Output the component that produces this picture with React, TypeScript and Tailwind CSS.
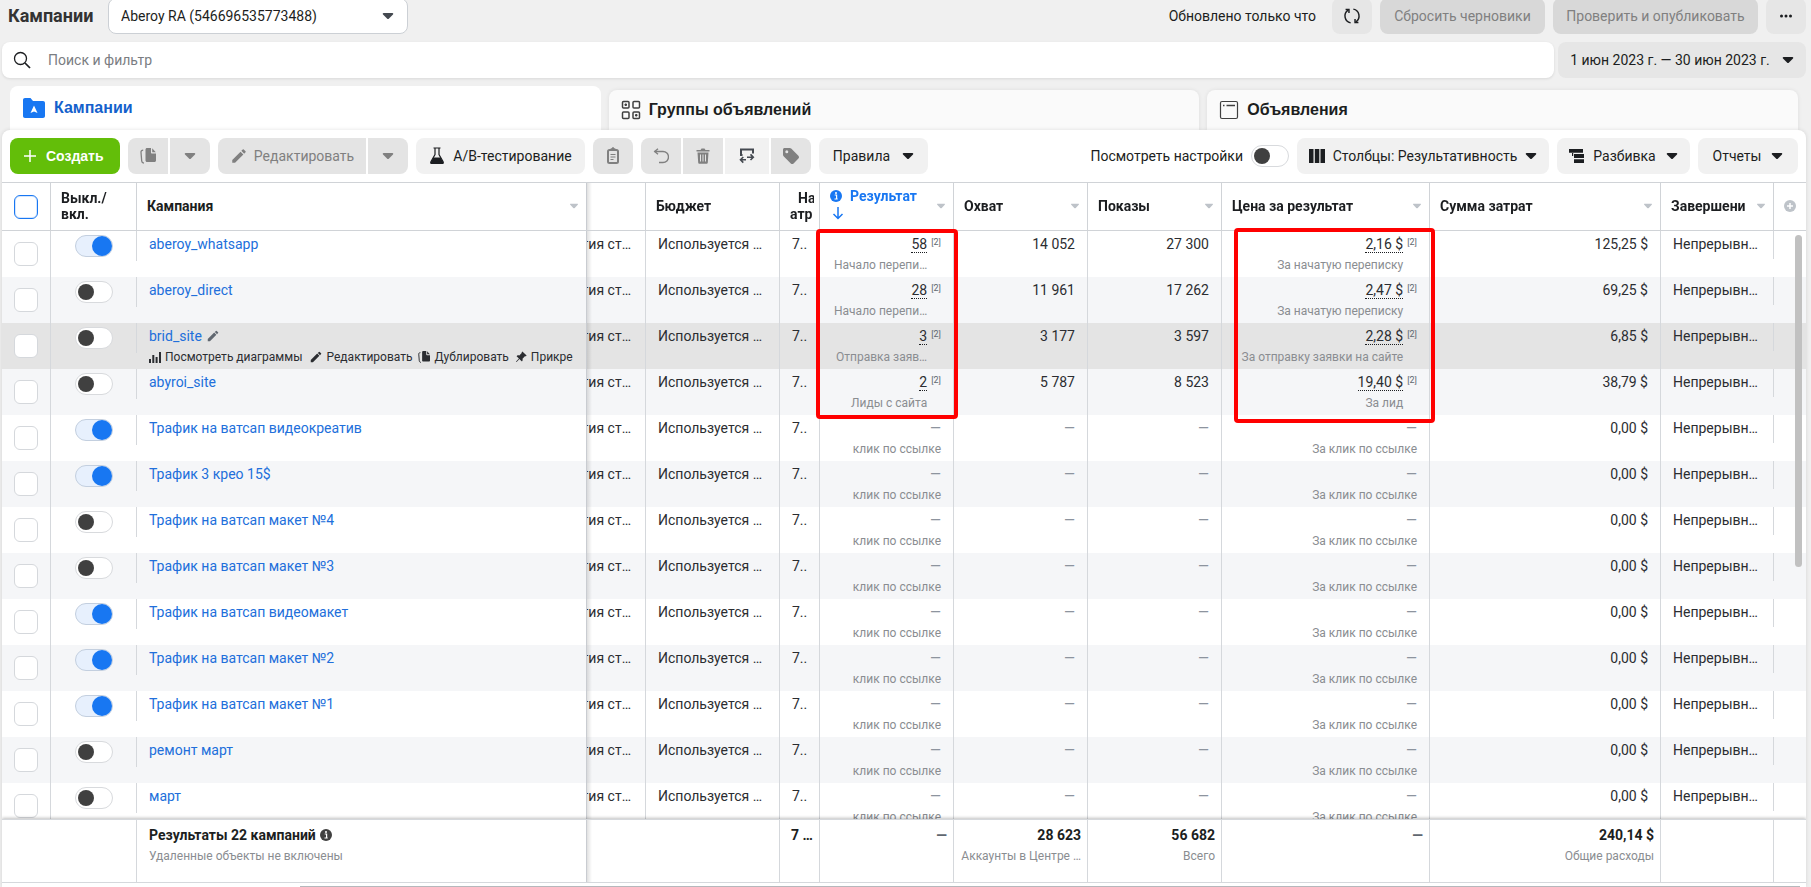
import type { ReactNode } from "react";
import clsx from "clsx";
import { MdEdit } from "react-icons/md";
import { BsPinAngleFill } from "react-icons/bs";

interface Campaign {
  name: string;
  on: boolean;
  result?: string;
  resultLabel: string;
  reach?: string;
  views?: string;
  price?: string;
  priceLabel: string;
  spent: string;
  hovered?: boolean;
}

const noResult = {
  resultLabel: "клик по ссылке",
  priceLabel: "За клик по ссылке",
  spent: "0,00 $",
};

const campaigns: Campaign[] = [
  {
    name: "aberoy_whatsapp",
    on: true,
    result: "58",
    resultLabel: "Начало перепи…",
    reach: "14 052",
    views: "27 300",
    price: "2,16 $",
    priceLabel: "За начатую переписку",
    spent: "125,25 $",
  },
  {
    name: "aberoy_direct",
    on: false,
    result: "28",
    resultLabel: "Начало перепи…",
    reach: "11 961",
    views: "17 262",
    price: "2,47 $",
    priceLabel: "За начатую переписку",
    spent: "69,25 $",
  },
  {
    name: "brid_site",
    on: false,
    result: "3",
    resultLabel: "Отправка заяв…",
    reach: "3 177",
    views: "3 597",
    price: "2,28 $",
    priceLabel: "За отправку заявки на сайте",
    spent: "6,85 $",
    hovered: true,
  },
  {
    name: "abyroi_site",
    on: false,
    result: "2",
    resultLabel: "Лиды с сайта",
    reach: "5 787",
    views: "8 523",
    price: "19,40 $",
    priceLabel: "За лид",
    spent: "38,79 $",
  },
  { name: "Трафик на ватсап видеокреатив", on: true, ...noResult },
  { name: "Трафик 3 крео 15$", on: true, ...noResult },
  { name: "Трафик на ватсап макет №4", on: false, ...noResult },
  { name: "Трафик на ватсап макет №3", on: false, ...noResult },
  { name: "Трафик на ватсап видеомакет", on: true, ...noResult },
  { name: "Трафик на ватсап макет №2", on: true, ...noResult },
  { name: "Трафик на ватсап макет №1", on: true, ...noResult },
  { name: "ремонт март", on: false, ...noResult },
  { name: "март", on: false, ...noResult },
];

function Caret({ className = "text-[#1c1e21]" }: { className?: string }) {
  return (
    <svg viewBox="0 0 12 8" className={clsx("h-2 w-3 shrink-0", className)} fill="currentColor">
      <path d="M1.6 1h8.8c.8 0 1.2.8.6 1.4L7 6.6a1.4 1.4 0 0 1-2 0L1 2.400C.4 1.800.8 1 1.600 1Z" />
    </svg>
  );
}

function HeadCaret() {
  return <Caret className="ml-auto scale-75 text-[#bec3c9]" />;
}

function DuplicateIcon({ className }: { className: string }) {
  return (
    <svg viewBox="0 0 16 16" className={className} fill="currentColor">
      <path d="M7 0h4v4.500c0 .6.400 1 1 1h4V12.500c0 .8-.7 1.500-1.500 1.500H7c-.8 0-1.500-.7-1.500-1.500v-11C5.500.7 6.200 0 7 0Z" />
      <path d="M12.200.2 15.800 4.300h-3.200c-.2 0-.4-.2-.4-.4Z" />
      <path d="M3.200 2.200c-1.500 0-2.300.7-2.200 2l.7 8.800c.1 1.300.8 2 2.300 2.200" fill="none" stroke="currentColor" strokeWidth="1.300" />
    </svg>
  );
}

function InfoIcon({ className }: { className: string }) {
  return (
    <svg viewBox="0 0 12 12" className={clsx("h-3 w-3 shrink-0", className)}>
      <circle cx="6" cy="6" r="6" fill="currentColor" />
      <circle cx="6" cy="3.100" r="1" fill="#fff" />
      <path d="M4.700 5h1.900v3.700M4.500 9h3.200" stroke="#fff" strokeWidth="1.200" fill="none" />
    </svg>
  );
}

function Switch({ on, label }: { on: boolean; label: string }) {
  return (
    <input
      type="checkbox"
      role="switch"
      aria-label={label}
      defaultChecked={on}
      className="relative block h-[22px] w-[38px] shrink-0 appearance-none rounded-full border border-[#d8dadd] bg-white before:absolute before:top-0.5 before:left-0.5 before:h-4 before:w-4 before:rounded-full before:bg-[#404040] checked:border-[#c3cfdf] checked:bg-[#e7f0fd] checked:before:top-0 checked:before:left-4 checked:before:h-5 checked:before:w-5 checked:before:bg-[#1877f2]"
    />
  );
}

function ToolButton({
  children,
  label,
  className,
  disabled,
}: {
  children: ReactNode;
  label?: string;
  className?: string;
  disabled?: boolean;
}) {
  return (
    <button
      type="button"
      aria-label={label}
      disabled={disabled}
      className={clsx(
        "flex h-9 shrink-0 items-center justify-center whitespace-nowrap",
        disabled ? "bg-[#e4e4e4] text-[#808080]" : "bg-[#f1f1f1] text-[#1c1e21]",
        className,
      )}
    >
      {children}
    </button>
  );
}

function TopBar() {
  return (
    <header className="flex h-[34px] items-end gap-2 overflow-hidden pl-1.5">
      <h1 className="flex h-9 w-[92px] items-center text-lg font-bold text-[#333]">Кампании</h1>
      <div className="grid w-[300px] items-center">
        <select
          aria-label="Рекламный аккаунт"
          className="col-start-1 row-start-1 h-9 w-full appearance-none rounded-lg border border-[#ccd0d5] bg-white pr-8 pl-3 text-sm"
        >
          <option>Aberoy RA (546696535773488)</option>
        </select>
        <Caret className="pointer-events-none col-start-1 row-start-1 mr-3.5 justify-self-end text-[#444950]" />
      </div>
      <span className="ml-auto flex h-9 items-center pr-2">Обновлено только что</span>
      <ToolButton label="Обновить" className="w-10 rounded-lg bg-[#e6e6e6]!">
        <svg viewBox="0 0 16 16" className="h-[18px] w-[18px]" fill="none" stroke="currentColor" strokeWidth="1.300">
          <path d="M6.800 14.100A6.200 6.200 0 0 1 4.600 2.800M9.200 1.900A6.200 6.200 0 0 1 11.400 13.200" />
          <path d="M2.300 2.300h3v3M13.700 13.700h-3v-3" />
        </svg>
      </ToolButton>
      <ToolButton disabled className="w-[165px] rounded-lg bg-[#d8d8d8]!">
        Сбросить черновики
      </ToolButton>
      <ToolButton disabled className="w-[205px] rounded-lg bg-[#d8d8d8]!">
        Проверить и опубликовать
      </ToolButton>
      <ToolButton label="Ещё" className="w-10 rounded-lg bg-[#e6e6e6]!">
        <svg viewBox="0 0 14 4" className="h-1 w-3.5" fill="currentColor">
          <circle cx="2.500" cy="2" r="1.500" />
          <circle cx="7" cy="2" r="1.500" />
          <circle cx="11.500" cy="2" r="1.500" />
        </svg>
      </ToolButton>
    </header>
  );
}

function SearchBar() {
  return (
    <div className="mt-2 flex gap-1">
      <label className="flex h-9 grow items-center rounded-lg bg-white pl-[11px] shadow-[0_1px_3px_rgba(0,0,0,0.1)]">
        <svg viewBox="0 0 18 18" className="h-[18px] w-[18px]" fill="none" stroke="#1c1e21" strokeWidth="1.300">
          <circle cx="7.500" cy="7.500" r="6" />
          <path d="m12 12 5 5" strokeWidth="1.700" />
        </svg>
        <input
          type="text"
          placeholder="Поиск и фильтр"
          aria-label="Поиск и фильтр"
          className="ml-[17px] grow bg-transparent outline-none placeholder:text-[#7a7d82]"
        />
      </label>
      <ToolButton className="w-[248px] gap-3 rounded-lg bg-[#e6e6e6]!">
        1 июн 2023 г. — 30 июн 2023 г.
        <Caret />
      </ToolButton>
    </div>
  );
}

function Tabs() {
  const title = "font-['Liberation_Sans','Arial',sans-serif] text-base font-bold";
  const idle =
    "flex h-10 items-center gap-2 rounded-t-lg bg-[#fafafa] px-3 shadow-[0_0_4px_rgba(0,0,0,0.08)]";
  return (
    <nav role="tablist" className="mt-2 grid grid-cols-3 items-end gap-2 px-2">
      <button
        type="button"
        role="tab"
        aria-selected="true"
        className="flex h-11 items-center gap-2 rounded-t-lg bg-white px-3 text-[#1461cc]"
      >
        <svg viewBox="0 0 24 22" className="h-[22px] w-6">
          <path d="M1 3c0-1.200.8-2 2-2h5.500l2.500 3h10c1.200 0 2 .8 2 2v13c0 1.200-.8 2-2 2H3c-1.200 0-2-.8-2-2Z" fill="#1877f2" />
          <path d="M12 8.500 15.500 16 12 14.500 8.500 16Z" fill="#fff" />
        </svg>
        <span className={title}>Кампании</span>
      </button>
      <button type="button" role="tab" aria-selected="false" className={idle}>
        <svg viewBox="0 0 20 20" className="h-5 w-5" fill="none" stroke="#404040" strokeWidth="1.500">
          <rect x="1.500" y="1.500" width="6.500" height="6.500" rx="1" />
          <rect x="12" y="1.500" width="6.500" height="6.500" rx="1" />
          <rect x="1.500" y="12" width="6.500" height="6.500" rx="1" />
          <rect x="12" y="12" width="6.500" height="6.500" rx="1" />
          <path d="M4.750 3.500v2.500M3.500 4.750h2.500M15.250 14v2.500M14 15.250h2.500" />
        </svg>
        <span className={title}>Группы объявлений</span>
      </button>
      <button type="button" role="tab" aria-selected="false" className={idle}>
        <svg viewBox="0 0 20 20" className="h-5 w-5" fill="none" stroke="#404040">
          <rect x="1.500" y="1.500" width="17" height="17" rx="1.500" strokeWidth="1.200" />
          <path d="M4 5.500h1.500M7.500 5.500H16" strokeWidth="1.500" />
        </svg>
        <span className={title}>Объявления</span>
      </button>
    </nav>
  );
}

function Toolbar() {
  return (
    <div className="flex items-center gap-2 px-2 py-2">
      <button
        type="button"
        className="flex h-9 w-[110px] shrink-0 items-center gap-2.5 rounded-lg bg-[#63be09] pl-3.5 font-['Liberation_Sans','Arial',sans-serif] font-bold text-white"
      >
        <svg viewBox="0 0 12 12" className="h-3 w-3" stroke="#fff" strokeWidth="1.500">
          <path d="M6 0v12M0 6h12" />
        </svg>
        Создать
      </button>
      <div className="flex gap-0.5">
        <ToolButton disabled label="Дублировать" className="w-10 rounded-l-lg">
          <DuplicateIcon className="h-4 w-4" />
        </ToolButton>
        <ToolButton disabled label="Варианты дублирования" className="w-10 rounded-r-lg">
          <Caret className="text-[#808080]" />
        </ToolButton>
      </div>
      <div className="flex gap-0.5">
        <ToolButton disabled className="w-[148px] gap-1.5 rounded-l-lg">
          <MdEdit className="h-[18px] w-[18px]" />
          Редактировать
        </ToolButton>
        <ToolButton disabled label="Варианты редактирования" className="w-10 rounded-r-lg">
          <Caret className="text-[#808080]" />
        </ToolButton>
      </div>
      <ToolButton className="w-[169px] gap-2 rounded-lg">
        <svg viewBox="0 0 16 18" className="h-[18px] w-4" fill="currentColor">
          <path d="M4.500 1h7M6 1v6.500L2 14.500c-.6 1.100 0 2 1.200 2h9.600c1.200 0 1.800-.9 1.200-2L10 7.500V1" fill="none" stroke="currentColor" strokeWidth="1.200" />
          <path d="M4.500 10.500h7l3 5c.3.700 0 1.500-1 1.500h-11c-1 0-1.300-.8-1-1.500Z" />
        </svg>
        А/В-тестирование
      </ToolButton>
      <ToolButton disabled label="Вставить" className="w-10 rounded-lg">
        <svg viewBox="0 0 14 18" className="h-[18px] w-3.5" fill="none" stroke="currentColor">
          <rect x="2" y="3" width="10" height="13" rx="1.500" strokeWidth="2" />
          <path d="M4.500 3.500V2h1.200a1.300 1.300 0 0 1 2.600 0h1.200v1.500Z" fill="currentColor" strokeWidth="1" />
          <path d="M4.500 7.500h5M4.500 10h5M4.500 12.500h3" strokeWidth="1.200" />
        </svg>
      </ToolButton>
      <div className="flex gap-0.5">
        <ToolButton disabled label="Отменить" className="w-10 rounded-l-lg">
          <svg viewBox="0 0 16 16" className="h-4 w-4" fill="none" stroke="currentColor" strokeWidth="1.400">
            <path d="M1.500 3.500H10a5 5 0 0 1 0 11H6" />
            <path d="M5 .7 1.700 3.500 5 6.300" />
          </svg>
        </ToolButton>
        <ToolButton disabled label="Удалить" className="w-10">
          <svg viewBox="0 0 14 16" className="h-4 w-3.5" fill="currentColor">
            <path d="M.5 2h4L5.500.5h3L9.500 2h4v1.500H.5Z" />
            <path d="M1.500 4.500h11l-.7 10c0 .8-.6 1.300-1.300 1.300h-7c-.7 0-1.300-.5-1.300-1.300Z" />
            <path d="M4.500 6.500v7M7 6.500v7M9.500 6.500v7" stroke="#e4e4e4" strokeWidth="1" />
          </svg>
        </ToolButton>
        <ToolButton label="Импорт и экспорт" className="w-11 text-[#444950]!">
          <svg viewBox="0 0 16 16" className="h-4 w-4" fill="none" stroke="currentColor" strokeWidth="2">
            <path d="M3.500 7H2V1.500H14V5.500" />
            <path d="M7 11.800H1.500M4.300 9 1.500 11.800 4.300 14.600M8 9.200h6M11.500 6.400l2.800 2.800-2.800 2.800" strokeWidth="1.600" />
          </svg>
        </ToolButton>
        <ToolButton disabled label="Метки" className="w-10 rounded-r-lg">
          <svg viewBox="0 0 16 16" className="h-4 w-4" fill="currentColor" fillRule="evenodd">
            <path d="M0 1.500C0 .7.700 0 1.500 0h5.300c.5 0 1 .2 1.400.6l7.200 7.200c.8.800.8 2 0 2.800l-4.800 4.800c-.8.800-2 .8-2.800 0L.6 8.200C.2 7.800 0 7.300 0 6.800ZM3.800 5.200a1.500 1.500 0 1 0 0-3 1.500 1.500 0 0 0 0 3Z" />
          </svg>
        </ToolButton>
      </div>
      <ToolButton className="w-[109px] gap-3 rounded-lg">
        Правила
        <Caret />
      </ToolButton>

      <label className="ml-auto flex items-center gap-2">
        Посмотреть настройки
        <Switch on={false} label="Посмотреть настройки" />
      </label>
      <ToolButton className="w-[252px] gap-2 rounded-lg">
        <span className="flex items-center gap-2">
          <svg viewBox="0 0 16 14" className="h-3.5 w-4" fill="currentColor">
            <path d="M0 0h4.500v14H0zM5.800 0h4.500v14H5.800zM11.500 0H16v14h-4.500z" />
          </svg>
          Столбцы: Результативность
        </span>
        <Caret />
      </ToolButton>
      <ToolButton className="w-[133px] gap-2.5 rounded-lg">
        <span className="flex items-center gap-2">
          <svg viewBox="0 0 16 14" className="h-3.5 w-4" fill="currentColor">
            <path d="M0 0h14v3.800H0zM5 5.100h10v3.800H5zM5 10.200h10V14H5zM3 4h1.200v3H3z" />
          </svg>
          Разбивка
        </span>
        <Caret />
      </ToolButton>
      <ToolButton className="w-[100px] gap-2.5 rounded-lg">
        Отчеты
        <Caret />
      </ToolButton>
    </div>
  );
}

function HeadCell({ children, className }: { children?: ReactNode; className?: string }) {
  return (
    <th
      scope="col"
      className={clsx(
        "h-12 border-b border-l border-[#d0d3d7] bg-white p-0 pb-0.5 text-left leading-4 font-bold",
        className,
      )}
    >
      <div className="flex items-center pr-1.5 pl-2.5">{children}</div>
    </th>
  );
}

const cell = "border-l border-[#d5d8dc] p-0 align-top";

// fading edge that the pinned name column throws on the scrolled ones
const pinned =
  "relative z-10 after:absolute after:inset-y-0 after:left-full after:w-1.5 after:border-l after:border-[#c9ccd1] after:bg-linear-to-r after:from-black/12 after:to-transparent";

function Metric({ value, label }: { value?: string; label?: string }) {
  return (
    <div className="flex justify-end gap-1 pt-[3px] pr-3 text-right">
      <div className="min-w-0">
        {value && label ? (
          <span className="block leading-5">
            <span className="border-b border-dotted border-[#1c1e21]">{value}</span>
          </span>
        ) : (
          <span className={clsx("block leading-5", !value && "text-[#8d949e]")}>{value ?? "—"}</span>
        )}
        {label && (
          <span className="mt-[3px] block text-xs leading-4 whitespace-nowrap text-[#8a8d91]">{label}</span>
        )}
      </div>
      {value && label && <sup className="top-0 text-[9px] leading-4 text-[#606770]">[2]</sup>}
    </div>
  );
}

function RowActions() {
  const action = "flex shrink-0 items-center gap-1";
  return (
    <div className="mr-2.5 flex gap-1.5 pt-[3px] text-xs leading-4">
      <button type="button" className={action}>
        <svg viewBox="0 0 12 12" className="h-3 w-3" fill="currentColor">
          <path d="M0 8h2v4H0zM3.300 4h2v8h-2zM6.600 6h2v6h-2zM10 1h2v11h-2z" />
        </svg>
        Посмотреть диаграммы
      </button>
      <button type="button" className={action}>
        <MdEdit className="h-3.5 w-3.5" />
        Редактировать
      </button>
      <button type="button" className={action}>
        <DuplicateIcon className="h-3 w-3" />
        Дублировать
      </button>
      <button type="button" className={action}>
        <BsPinAngleFill className="h-3 w-3" />
        Прикре
      </button>
    </div>
  );
}

function CampaignRow({ item, striped }: { item: Campaign; striped: boolean }) {
  return (
    <tr className={item.hovered ? "bg-[#e4e4e4]" : striped ? "bg-[#f5f6f8]" : "bg-white"}>
      <td className="h-[46px] p-0 align-top">
        <input
          type="checkbox"
          aria-label={`Выбрать ${item.name}`}
          className="mx-auto mt-[11px] block h-6 w-6 appearance-none rounded-md border border-[#d5d8dc] bg-white"
        />
      </td>
      <td className={cell}>
        <div className="flex justify-center pt-1">
          <Switch on={item.on} label={`Статус ${item.name}`} />
        </div>
      </td>
      <td className={clsx("bg-inherit p-0 align-top", pinned)}>
        <div className="h-[30px] border-l border-[#d5d8dc] pt-[3px] pl-3">
          <div className="flex h-5 items-center gap-1 leading-5 whitespace-nowrap">
            <a href="#" className="text-[#216fdb]">
              {item.name}
            </a>
            {item.hovered && (
              <button type="button" aria-label="Изменить название">
                <MdEdit className="h-3.5 w-3.5 text-[#606770]" />
              </button>
            )}
          </div>
          {item.hovered && <RowActions />}
        </div>
      </td>
      <td className="p-0 align-top">
        <div className="flex justify-end pt-[3px] pr-3.5 leading-5 whitespace-nowrap">тия ст…</div>
      </td>
      <td className={clsx(cell, "pt-[3px]! pl-3! leading-5 whitespace-nowrap")}>Используется …</td>
      <td className={clsx(cell, "pt-[3px]! pl-3! leading-5 whitespace-nowrap")}>7..</td>
      <td className={cell}>
        <Metric value={item.result} label={item.resultLabel} />
      </td>
      <td className={cell}>
        <Metric value={item.reach} />
      </td>
      <td className={cell}>
        <Metric value={item.views} />
      </td>
      <td className={cell}>
        <Metric value={item.price} label={item.priceLabel} />
      </td>
      <td className={cell}>
        <Metric value={item.spent} />
      </td>
      <td className={clsx(cell, "pt-[3px]! pl-3! leading-5 whitespace-nowrap")}>Непрерывн…</td>
      <td className="p-0 align-top">
        <div className="h-7 border-l border-[#d5d8dc]" />
      </td>
    </tr>
  );
}

function Total({ value, label }: { value?: string; label?: string }) {
  return (
    <td className="border-t border-l border-[#d5d8dc] bg-white p-0 pt-[5px] pr-1.5 text-right align-top">
      {value && (
        <div className={clsx("leading-5 font-bold", value === "—" && "text-[#606770]")}>{value}</div>
      )}
      {label && (
        <div className="mt-[3px] text-xs leading-4 whitespace-nowrap text-[#8a8d91]">{label}</div>
      )}
    </td>
  );
}

function CampaignTable() {
  return (
    <div className="relative flex min-h-0 grow flex-col border-t border-[#d0d3d7]">
      <div className="min-h-0 grow basis-0 overflow-hidden">
        <table className="w-full table-fixed border-separate border-spacing-0">
          <colgroup>
            <col className="w-12" />
            <col className="w-[86px]" />
            <col />
            <col className="w-[59px]" />
            <col className="w-[134px]" />
            <col className="w-10" />
            <col className="w-[134px]" />
            <col className="w-[134px]" />
            <col className="w-[134px]" />
            <col className="w-[208px]" />
            <col className="w-[231px]" />
            <col className="w-[113px]" />
            <col className="w-[33px]" />
          </colgroup>
          <thead className="sticky top-0 z-20">
            <tr>
              <th className="h-12 border-b border-[#d0d3d7] bg-white p-0">
                <input
                  type="checkbox"
                  aria-label="Выбрать все"
                  className="mx-auto block h-6 w-6 appearance-none rounded-md border border-[#1877f2] bg-white shadow-[inset_0_0_0_1px_#d5e6fd]"
                />
              </th>
              <HeadCell>
                Выкл./
                <br />
                вкл.
              </HeadCell>
              <HeadCell className={pinned}>
                Кампания
                <HeadCaret />
              </HeadCell>
              <HeadCell className="border-l-0" />
              <HeadCell>Бюджет</HeadCell>
              <HeadCell>
                <span className="w-6 shrink-0 overflow-hidden whitespace-nowrap">
                  <span className="block pl-2">На</span>
                  атр
                </span>
              </HeadCell>
              <HeadCell>
                <span className="pb-1 text-[#1877f2]">
                  <span className="flex items-center gap-2">
                    <InfoIcon className="text-[#1877f2]" />
                    Результат
                  </span>
                  <svg viewBox="0 0 12 14" className="mt-0.5 ml-0.5 h-3.5 w-3" fill="none" stroke="currentColor" strokeWidth="1.500">
                    <path d="M6 1v11M1.500 8 6 12.500 10.500 8" />
                  </svg>
                </span>
                <HeadCaret />
              </HeadCell>
              <HeadCell>
                Охват
                <HeadCaret />
              </HeadCell>
              <HeadCell>
                Показы
                <HeadCaret />
              </HeadCell>
              <HeadCell>
                Цена за результат
                <HeadCaret />
              </HeadCell>
              <HeadCell>
                Сумма затрат
                <HeadCaret />
              </HeadCell>
              <HeadCell>
                Завершени
                <HeadCaret />
              </HeadCell>
              <HeadCell>
                <button type="button" aria-label="Добавить столбец">
                  <svg viewBox="0 0 12 12" className="block h-3 w-3">
                    <circle cx="6" cy="6" r="6" fill="#bec3c9" />
                    <path d="M6 3v6M3 6h6" stroke="#fff" strokeWidth="1.500" />
                  </svg>
                </button>
              </HeadCell>
            </tr>
          </thead>
          <tbody className="text-[#2b2d31]">
            {campaigns.map((item, i) => (
              <CampaignRow key={item.name} item={item} striped={i % 2 === 1} />
            ))}
          </tbody>
          <tfoot className="sticky bottom-0 z-20 shadow-[0_-1px_3px_rgba(0,0,0,0.25)]">
            <tr>
              <td colSpan={2} className="h-[63px] border-t border-[#d5d8dc] bg-white p-0" />
              <td className={clsx("border-t border-l border-[#d5d8dc] bg-white p-0 pt-[5px] pl-3 align-top", pinned)}>
                <div className="flex items-center gap-1 leading-5 font-bold">
                  Результаты 22 кампаний
                  <InfoIcon className="text-[#404040]" />
                </div>
                <div className="mt-[3px] text-xs leading-4 text-[#8a8d91]">Удаленные объекты не включены</div>
              </td>
              <td colSpan={2} className="border-t border-[#d5d8dc] bg-white p-0" />
              <Total value="7 …" />
              <Total value="—" />
              <Total value="28 623" label="Аккаунты в Центре …" />
              <Total value="56 682" label="Всего" />
              <Total value="—" />
              <Total value="240,14 $" label="Общие расходы" />
              <Total />
              <Total />
            </tr>
          </tfoot>
        </table>
      </div>

      {/* horizontal scrollbar */}
      <div className="h-[5px] shrink-0 border-t border-[#d5d8dc] pt-[3px]">
        <div className="mr-1.5 ml-[298px] h-px bg-[#b5b8bc]" />
      </div>

      {/* vertical scrollbar */}
      <div className="absolute top-[52px] right-1 z-30 h-[332px] w-[7px] rounded-full bg-[#c1c1c1]" />

      {/* highlighted results */}
      <div className="pointer-events-none absolute top-[46px] right-[848px] z-30 h-[190px] w-[142px] rounded-sm border-4 border-[#ff0000]" />
      <div className="pointer-events-none absolute top-[45px] right-[371px] z-30 h-[195px] w-[201px] rounded-sm border-4 border-[#ff0000]" />
    </div>
  );
}

export default function App() {
  return (
    <div className="flex h-screen flex-col overflow-hidden bg-[#f0f0f0] pr-[5px] pl-0.5 font-['Roboto','Liberation_Sans',sans-serif] text-sm text-[#1c1e21]">
      <TopBar />
      <SearchBar />
      <Tabs />
      <main className="relative flex min-h-0 grow flex-col rounded-t-lg bg-white shadow-[0_0_4px_rgba(0,0,0,0.12)]">
        <Toolbar />
        <CampaignTable />
      </main>
    </div>
  );
}
